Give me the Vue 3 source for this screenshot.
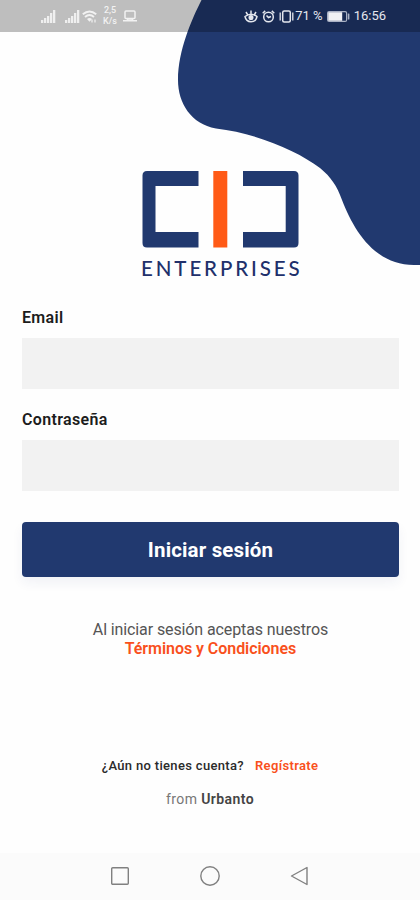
<template>
  <div class="screen">
    <svg class="wave" width="244" height="268" viewBox="176 0 244 268">
      <path
        d="M201.500 0C192 19 178 50 178 80C178 103 191 124 216 128.500C256 133 298 151 320 168C331 177 337 186 342 200C354 231 375 265 414 265H420V0Z"
        fill="#21396f"
      />
    </svg>

    <header class="status-bar">
      <div class="status-left">
        <svg
          v-for="(s, i) in signals"
          :key="i"
          class="signal"
          :class="s"
          width="15"
          height="13"
          viewBox="0 0 15 13"
          fill="#efefef"
        >
          <path d="M0 10h2.300v3H0zM3 8h2.300v5H3zM6 6h2.300v7H6zM9 3h2.300v10H9zM12 0h2.300v13H12z" />
        </svg>
        <svg class="wifi" width="15" height="13" viewBox="0 0 15 13" fill="none" stroke="#f2f2f2">
          <path d="M.8 4.300Q7.500-1.500 14.200 4.300M3 7Q7.500 3.200 12 7" stroke-width="1.900" />
          <path d="M5 9Q7.500 7 10 9L7.500 11.800Z" fill="#f2f2f2" stroke="none" />
          <path d="M10 12.500v-3M13 9.500v3" stroke-width="1.200" />
        </svg>
        <div class="speed"><span>2,5</span><span>K/s</span></div>
        <svg class="laptop" width="14" height="12" viewBox="0 0 14 12" fill="none" stroke="#f2f2f2" stroke-width="1.500">
          <rect x="2" y="1" width="10" height="7.500" rx="1" />
          <path d="M0 10.700h14M4.500 8.500v1.500h5V8.500" />
        </svg>
      </div>
      <div class="status-right">
        <svg class="eye" width="14" height="13" viewBox="0 0 14 13" fill="none" stroke="#e4e7ee" stroke-width="1.500">
          <path d="M1 6.500Q7 1.800 13 6.500Q12 11.700 7 11.700Q2 11.700 1 6.500ZM7 3.500V.5M3.500 4.500L2 2M10.500 4.500L12 2" />
          <circle cx="7" cy="7.500" r="1.800" fill="#e4e7ee" />
        </svg>
        <svg class="alarm" width="13" height="13" viewBox="0 0 13 13" fill="none" stroke="#e4e7ee" stroke-width="1.500">
          <circle cx="6.500" cy="7" r="4.800" />
          <path d="M.7 3.200L3.200.9M12.300 3.200L9.800.9M4.500 5.500L6.500 7.500L9 6.500" />
        </svg>
        <svg class="vibrate" width="17" height="13" viewBox="0 0 17 13" fill="none" stroke="#e4e7ee" stroke-width="1.500">
          <rect x="4.700" y="1" width="7.600" height="11" rx="1.500" />
          <path d="M2.200 2.500v8M14.800 2.500v8" stroke-width="1.300" />
        </svg>
        <span class="percent">71 %</span>
        <svg class="battery" width="23" height="11" viewBox="0 0 23 11">
          <rect x=".6" y=".6" width="19" height="9.800" rx="1.500" fill="none" stroke="#a9b1c4" stroke-width="1.200" />
          <rect x="1.200" y="1.200" width="14" height="8.600" fill="#f0f1f4" />
          <rect x="20.800" y="2.500" width="1.600" height="6" rx=".6" fill="#a9b1c4" />
        </svg>
        <span class="clock">16:56</span>
      </div>
    </header>

    <main class="content">
      <div class="logo">
        <svg width="158" height="77" viewBox="0 0 158 77">
          <path d="M56.500 0V15H13.500V61H56.500V76.500H5Q.5 76.500 .5 72V4.500Q.5 0 5 0Z" fill="#21396f" />
          <path d="M71.300 0H85.300V76.500H71.300Z" fill="#ff5a16" />
          <path d="M101 0H152Q156.500 0 156.500 4.500V72Q156.500 76.500 152 76.500H101V61H143.700V15H101Z" fill="#21396f" />
        </svg>
        <div class="logo-text">ENTERPRISES</div>
      </div>

      <form class="form" @submit.prevent>
        <label for="email">Email</label>
        <input id="email" v-model="email" type="email" />
        <label for="password" class="password-label">Contraseña</label>
        <input id="password" v-model="password" type="password" />
        <button class="login" type="submit">Iniciar sesión</button>
      </form>

      <p class="terms">
        <span class="terms-intro">Al iniciar sesión aceptas nuestros</span>
        <a class="terms-link">Términos y Condiciones</a>
      </p>
    </main>

    <footer class="footer">
      <div class="signup">
        <span>¿Aún no tienes cuenta?</span>
        <a>Regístrate</a>
      </div>
      <div class="from">from <b>Urbanto</b></div>
    </footer>

    <nav class="nav-bar">
      <svg width="22" height="22" viewBox="0 0 22 22"><rect x="2.700" y="2.700" width="16.600" height="16.600" rx="1" /></svg>
      <svg width="22" height="22" viewBox="0 0 22 22"><circle cx="11" cy="11" r="9.200" /></svg>
      <svg width="22" height="22" viewBox="0 0 22 22"><path d="M2.500 11L18 2.500V19.500Z" /></svg>
    </nav>
  </div>
</template>

<script setup>
import { ref } from 'vue'

const email = ref('')
const password = ref('')
const signals = ['first', 'second']
</script>

<style>
body { margin: 0; background: #fefefe; }
</style>

<style scoped>
.screen {
  position: relative; display: flex; flex-direction: column;
  width: 420px; height: 900px; overflow: hidden;
  background: #fefefe; color: #222;
  font-family: Roboto, "Liberation Sans", sans-serif;
}
svg { display: block; flex: none; }
.wave { position: absolute; top: 0; right: 0; }

.status-bar {
  position: relative; flex: none; height: 32px; box-sizing: border-box;
  display: flex; justify-content: space-between; align-items: center;
  padding: 0 34px 0 41px; background: rgba(0,0,0,0.25);
}
.status-left, .status-right { display: flex; align-items: center; }
.signal.second { margin-left: 9px; }
.wifi { margin-left: 2px; }
.speed {
  display: flex; flex-direction: column; align-items: center;
  width: 16px; margin-left: 5px; color: #f2f2f2;
  font-size: 9px; line-height: 11px; font-weight: 500;
}
.laptop { margin-left: 5px; }
.alarm { margin-left: 4px; }
.vibrate { margin-left: 3px; }
.percent, .clock { color: #e4e7ee; font-size: 13px; line-height: 16px; white-space: nowrap; }
.percent { margin-left: 0; }
.battery { margin-left: 4px; }
.clock { margin-left: 4px; }

.content { position: relative; flex: 1; padding: 139px 21px 0 22px; }
.logo { width: 158px; margin-left: 120px; }
.logo-text {
  margin: 7px 0 0 -1px; color: #21306b; white-space: nowrap;
  font-family: Lato, sans-serif; font-size: 20.5px; line-height: 26px;
  font-weight: 500; letter-spacing: 2.9px;
}

.form { display: flex; flex-direction: column; margin-top: 27px; }
label { font-size: 16px; line-height: 20px; font-weight: 600; letter-spacing: 0.35px; color: #1c1c1c; }
.password-label { margin-top: 21px; }
input {
  height: 51px; margin: 10px 0 0; padding: 0 14px; box-sizing: border-box;
  border: none; outline: none; border-radius: 0; background: #f2f2f2; font-size: 16px;
}
.login {
  height: 55px; margin: 31px 0 0; padding: 0; border: none; border-radius: 4px;
  background: #21396f; color: #fff; box-shadow: 0 6px 12px rgba(33,57,111,0.06);
  font-family: inherit; font-size: 20.5px; font-weight: 700; letter-spacing: 0.15px;
}
.terms {
  display: flex; flex-direction: column; align-items: center;
  margin: 43px 0 0; font-size: 16px; line-height: 19px;
}
.terms-intro { color: #555; letter-spacing: -0.11px; }
.terms-link { color: #f9501c; font-weight: 600; letter-spacing: -0.05px; }

.footer { display: flex; flex-direction: column; align-items: center; height: 96px; }
.signup {
  display: flex; gap: 11px; font-size: 13px; line-height: 18px; font-weight: 500;
  letter-spacing: 0.33px; color: #2b2b2b;
}
.signup a { color: #f9501c; font-weight: 600; }
.from { margin-top: 15px; font-size: 14px; line-height: 18px; letter-spacing: 0.4px; color: #777; }
.from b { color: #444; font-weight: 600; }

.nav-bar {
  flex: none; height: 47px; box-sizing: border-box;
  display: flex; justify-content: center; gap: 68px; padding-top: 12px;
  background: #fbfbfb;
}
.nav-bar svg { fill: none; stroke: #808080; stroke-width: 1.4; stroke-linejoin: round; }
</style>
